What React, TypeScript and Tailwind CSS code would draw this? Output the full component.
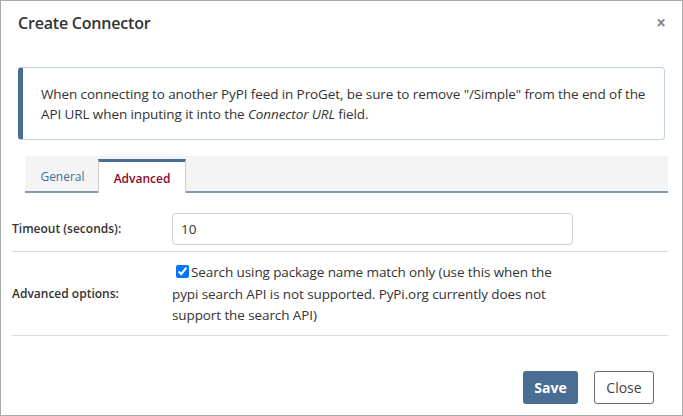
export default function App() {
  return (
    <div
      className="relative w-[683px] h-[416px] overflow-hidden border border-[#ababab] bg-white text-[#333]"
      style={{ fontFamily: '"Open Sans", "Noto Sans", sans-serif' }}
    >
      {/* header */}
      <div className="flex items-start justify-between pl-[17px] pr-[16px] pt-[10px] h-[44px]">
        <h1 className="text-[16px] leading-[24px] font-semibold text-[#333] tracking-[-0.2px]">Create Connector</h1>
        <button className="mt-[1px] text-[#888] text-[17px] leading-[22px] font-bold">&times;</button>
      </div>

      {/* info */}
      <div className="mx-[17px] mt-[22px] h-[73px] rounded-[4px] border border-[#c6d4e2] border-l-[5px] border-l-[#4a6d94] pl-[18px] pt-[16px] text-[13.5px] leading-[20px] tracking-[-0.1px]">
        When connecting to another PyPI feed in ProGet, be sure to remove "/Simple" from the end of the
        <br />
        API URL when inputing it into the <i>Connector URL</i> field.
      </div>

      {/* tabs */}
      <div className="ml-[24px] mr-[14px] mt-[16px] flex h-[37px] items-end border-b-2 border-[#7f9ab5] bg-[#f4f4f4]">
        <div className="flex h-[34px] w-[73px] items-center justify-center pl-[2px] pt-[6px] text-[12px] text-[#4a6d94]">General</div>
        <div className="-mb-[2px] flex h-[34px] w-[88px] items-center justify-center border-x border-t-[3px] border-x-[#d0d0d0] border-t-[#4a6d94] bg-white pt-[2px] text-[12px] font-semibold text-[#8b0a2a]">
          Advanced
        </div>
      </div>

      {/* form */}
      <div className="ml-[11px] mr-[14px] mt-[20px]">
        <div className="flex items-center border-b border-[#dcdcdc] pb-[6px]">
          <label className="w-[160px] text-[12px] font-semibold">Timeout (seconds):</label>
          <input
            defaultValue="10"
            className="h-[32px] w-[401px] rounded-[4px] border border-[#cfcfcf] px-[8px] text-[13.5px] text-[#333] outline-none"
          />
        </div>
        <div className="flex items-center border-b border-[#dcdcdc] pt-[10px] pb-[8px]">
          <label className="w-[160px] text-[12px] font-semibold">Advanced options:</label>
          <div className="w-[401px] text-[13.5px] leading-[21.5px] tracking-[-0.1px]">
            <input type="checkbox" defaultChecked className="ml-[4px] mr-[2px] h-[13px] w-[13px] align-[-1px] accent-[#0075ff]" />
            Search using package name match only (use this when the pypi search API is not supported. PyPi.org currently does not support the search API)
          </div>
        </div>
      </div>

      {/* footer */}
      <div className="flex justify-end gap-[16px] pr-[28px] pt-[35px]">
        <button className="h-[33px] w-[55px] rounded-[3px] bg-[#4a6d94] text-[14px] font-bold text-white">Save</button>
        <button className="h-[33px] w-[60px] rounded-[3px] border border-[#6b6b6b] bg-white text-[14px] text-[#444]">Close</button>
      </div>
    </div>
  )
}
